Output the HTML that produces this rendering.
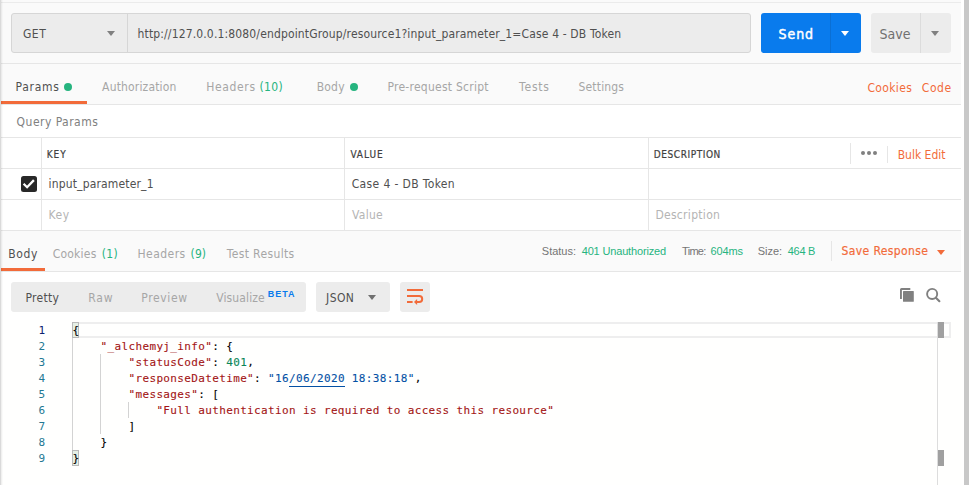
<!DOCTYPE html>
<html><head><meta charset="utf-8">
<style>
html,body{margin:0;padding:0;}
body{width:969px;height:485px;overflow:hidden;background:#fafafa;position:relative;font-family:"DejaVu Sans Condensed","DejaVu Sans","Liberation Sans",sans-serif;font-size:12px;color:#505050;}
.a{position:absolute;}
.t{position:absolute;white-space:pre;height:16px;}
.hl{position:absolute;height:1px;background:#e6e6e6;left:1px;width:960px;}
.vl{position:absolute;width:1px;background:#e6e6e6;}
.tri{position:absolute;width:0;height:0;border-left:4px solid transparent;border-right:4px solid transparent;border-top:5px solid #808080;}
.mono{font-family:"DejaVu Sans Mono","Liberation Mono",monospace;font-size:11px;}
.ln{position:absolute;left:0;width:45px;text-align:right;color:#237893;height:16px;line-height:16px;padding-top:1px;}
.cl{position:absolute;left:72.6px;height:16px;line-height:16px;padding-top:1px;white-space:pre;color:#000;letter-spacing:0.358px;-webkit-text-stroke:0.1px;}
.k{color:#a31515;}
.s{color:#0451a5;}
.n{color:#098658;}
.bm{position:absolute;left:72px;width:7px;height:16px;box-sizing:border-box;border:1px solid #b9b9b9;background:#e5efe5;}
.ig{position:absolute;width:1px;background:#d3d3d3;}
</style></head><body>
<!-- frame -->
<div class="a" style="left:961px;top:0;width:3px;height:485px;background:#ffffff"></div>
<div class="a" style="left:964px;top:0;width:5px;height:485px;background:#c8c8c8"></div>
<div class="hl" style="left:0;top:2px;width:961px;background:#ebebeb"></div>

<!-- url bar -->
<div class="a" style="left:11px;top:13px;width:740px;height:40px;background:#ececec;border:1px solid #d6d6d6;border-radius:3px;box-sizing:border-box"></div>
<div class="vl" style="left:127px;top:14px;height:38px;background:#d6d6d6"></div>
<div class="tri" style="left:107px;top:31px"></div>

<!-- send -->
<div class="a" style="left:761px;top:13px;width:100px;height:40px;background:#097bed;border-radius:3px"></div>
<div class="vl" style="left:830px;top:13px;height:40px;background:#0a6fd4"></div>
<div class="tri" style="left:841px;top:31px;border-top-color:#fff"></div>
<!-- save -->
<div class="a" style="left:871px;top:13px;width:80px;height:40px;background:#ececec;border-radius:3px"></div>
<div class="vl" style="left:920px;top:13px;height:40px;background:#dcdcdc"></div>
<div class="tri" style="left:931px;top:31px"></div>

<div class="hl" style="top:63px"></div>

<!-- request tabs -->
<div class="a" style="left:64px;top:83px;width:8px;height:8px;border-radius:50%;background:#26b47f"></div>
<div class="a" style="left:350px;top:83px;width:8px;height:8px;border-radius:50%;background:#26b47f"></div>
<div class="a" style="left:1px;top:101px;width:86px;height:3px;background:#f26b3a"></div>
<div class="hl" style="top:104px"></div>

<!-- query params -->
<div class="a" style="left:1px;top:105px;width:960px;height:125px;background:#fff"></div>
<div class="hl" style="top:137px"></div>
<div class="hl" style="top:168px"></div>
<div class="hl" style="top:199px"></div>
<div class="hl" style="top:230px"></div>
<div class="vl" style="left:41px;top:137px;height:93px"></div>
<div class="vl" style="left:344px;top:137px;height:93px"></div>
<div class="vl" style="left:648px;top:137px;height:93px"></div>
<div class="vl" style="left:850px;top:143px;height:21px"></div>
<div class="vl" style="left:887px;top:146px;height:17px"></div>
<div class="a" style="left:861px;top:151px;width:4px;height:4px;border-radius:50%;background:#808080;box-shadow:6px 0 0 #808080,12px 0 0 #808080"></div>
<div class="a" style="left:21px;top:176px;width:16px;height:16px;background:#282828;border-radius:2.5px"></div>
<svg class="a" style="left:21px;top:176px" width="16" height="16" viewBox="0 0 16 16"><path d="M2.6 7.8 L6.1 11.2 L12.9 4.1" fill="none" stroke="#fff" stroke-width="2.3"/></svg>

<!-- response tabs -->
<div class="a" style="left:1px;top:268px;width:44px;height:3px;background:#f26b3a"></div>
<div class="hl" style="top:271px"></div>
<div class="vl" style="left:831px;top:241px;height:20px"></div>
<div class="tri" style="left:937px;top:250px;border-top-color:#f26b3a"></div>

<!-- response toolbar -->
<div class="a" style="left:1px;top:272px;width:960px;height:213px;background:#fff"></div>
<div class="a" style="left:11px;top:282px;width:295px;height:30px;background:#ececec;border-radius:3px"></div>
<div class="a" style="left:316px;top:282px;width:74px;height:30px;background:#ececec;border-radius:3px"></div>
<div class="tri" style="left:368px;top:295px;border-top-color:#707070"></div>
<div class="a" style="left:400px;top:282px;width:30px;height:30px;background:#ececec;border-radius:3px"></div>
<svg class="a" style="left:400px;top:282px" width="30" height="30" viewBox="0 0 30 30"><path d="M7 8 H23 M7 14 H19.2 a3 3 0 0 1 0 6 H16.5 M7 20 H12.6" fill="none" stroke="#f26b3a" stroke-width="2"/><path d="M17.1 17 L14 20 L17.1 23 Z" fill="#f26b3a"/></svg>
<!-- copy / search icons -->
<svg class="a" style="left:898px;top:286px" width="18" height="18" viewBox="0 0 18 18"><rect x="5" y="5" width="10.8" height="10.8" rx="0.6" fill="#808080"/><path d="M2.95 12.9 V3.6 a0.6 0.6 0 0 1 0.6 -0.6 H12.3" fill="none" stroke="#808080" stroke-width="1.9"/></svg>
<svg class="a" style="left:924px;top:286px" width="18" height="18" viewBox="0 0 18 18"><circle cx="8.15" cy="7.9" r="5.05" fill="none" stroke="#808080" stroke-width="1.9"/><path d="M11.9 11.7 L15.4 15.2" stroke="#808080" stroke-width="2.1" stroke-linecap="round"/></svg>

<!-- code -->
<div class="a" style="left:1px;top:320px;width:960px;height:165px;background:#fffffe"></div>
<div class="a" style="left:72px;top:322px;width:879px;height:16px;box-sizing:border-box;border:2px solid #eeeeee"></div>
<div class="vl" style="left:937px;top:322px;height:163px;background:#dddddd"></div>
<div class="a" style="left:938px;top:322px;width:6px;height:16px;background:#a0a0a0"></div>
<div class="a" style="left:938px;top:450px;width:6px;height:16px;background:#a0a0a0"></div>
<div class="bm" style="top:322px"></div>
<div class="bm" style="top:450px"></div>
<div class="ig" style="left:72px;top:338px;height:112px"></div>
<div class="ig" style="left:100px;top:354px;height:80px"></div>
<div class="ig" style="left:128px;top:402px;height:16px"></div>
<div class="a" style="left:289px;top:386px;width:56px;height:1px;background:#0451a5"></div>
<div class="mono">
<div class="ln" style="top:322px;color:#0b216f">1</div><div class="cl" style="top:322px">{</div>
<div class="ln" style="top:338px">2</div><div class="cl" style="top:338px">    <span class="k">"_alchemyj_info"</span>: {</div>
<div class="ln" style="top:354px">3</div><div class="cl" style="top:354px">        <span class="k">"statusCode"</span>: <span class="n">401</span>,</div>
<div class="ln" style="top:370px">4</div><div class="cl" style="top:370px">        <span class="k">"responseDatetime"</span>: <span class="s">"16/06/2020 18:38:18"</span>,</div>
<div class="ln" style="top:386px">5</div><div class="cl" style="top:386px">        <span class="k">"messages"</span>: [</div>
<div class="ln" style="top:402px">6</div><div class="cl" style="top:402px">            <span class="k">"Full authentication is required to access this resource"</span></div>
<div class="ln" style="top:418px">7</div><div class="cl" style="top:418px">        ]</div>
<div class="ln" style="top:434px">8</div><div class="cl" style="top:434px">    }</div>
<div class="ln" style="top:450px">9</div><div class="cl" style="top:450px">}</div>
</div>

<!-- texts -->
<div class="t" style="left:23.00px;top:26px;font:normal 12px/16px 'DejaVu Sans Condensed','DejaVu Sans','Liberation Sans',sans-serif;letter-spacing:0.500px;color:#505050;">GET</div>
<div class="t" style="left:137.50px;top:26px;font:normal 12px/16px 'DejaVu Sans Condensed','DejaVu Sans','Liberation Sans',sans-serif;letter-spacing:0.151px;color:#505050;">http://127.0.0.1:8080/endpointGroup/resource1?input_parameter_1=Case 4 - DB Token</div>
<div class="t" style="left:778.60px;top:26px;font:normal 14px/16px 'DejaVu Sans Condensed','DejaVu Sans','Liberation Sans',sans-serif;letter-spacing:0.900px;color:#ffffff;-webkit-text-stroke:0.45px">Send</div>
<div class="t" style="left:879.50px;top:26px;font:normal 14px/16px 'DejaVu Sans Condensed','DejaVu Sans','Liberation Sans',sans-serif;letter-spacing:0.000px;color:#707070;">Save</div>
<div class="t" style="left:15.60px;top:79px;font:normal 12px/16px 'DejaVu Sans Condensed','DejaVu Sans','Liberation Sans',sans-serif;letter-spacing:0.720px;color:#505050;">Params</div>
<div class="t" style="left:102.10px;top:79px;font:normal 12px/16px 'DejaVu Sans Condensed','DejaVu Sans','Liberation Sans',sans-serif;letter-spacing:0.167px;color:#a6a6a6;">Authorization</div>
<div class="t" style="left:206.30px;top:79px;font:normal 12px/16px 'DejaVu Sans Condensed','DejaVu Sans','Liberation Sans',sans-serif;letter-spacing:0.633px;color:#a6a6a6;">Headers</div>
<div class="t" style="left:259.50px;top:79px;font:normal 12px/16px 'DejaVu Sans Condensed','DejaVu Sans','Liberation Sans',sans-serif;letter-spacing:0.367px;color:#26b47f;">(10)</div>
<div class="t" style="left:316.70px;top:79px;font:normal 12px/16px 'DejaVu Sans Condensed','DejaVu Sans','Liberation Sans',sans-serif;letter-spacing:0.200px;color:#a6a6a6;">Body</div>
<div class="t" style="left:387.50px;top:79px;font:normal 12px/16px 'DejaVu Sans Condensed','DejaVu Sans','Liberation Sans',sans-serif;letter-spacing:0.253px;color:#a6a6a6;">Pre-request Script</div>
<div class="t" style="left:519.10px;top:79px;font:normal 12px/16px 'DejaVu Sans Condensed','DejaVu Sans','Liberation Sans',sans-serif;letter-spacing:0.800px;color:#a6a6a6;">Tests</div>
<div class="t" style="left:578.50px;top:79px;font:normal 12px/16px 'DejaVu Sans Condensed','DejaVu Sans','Liberation Sans',sans-serif;letter-spacing:0.171px;color:#a6a6a6;">Settings</div>
<div class="t" style="left:867.40px;top:80px;font:normal 12px/16px 'DejaVu Sans Condensed','DejaVu Sans','Liberation Sans',sans-serif;letter-spacing:0.350px;color:#f26b3a;">Cookies</div>
<div class="t" style="left:921.80px;top:80px;font:normal 12px/16px 'DejaVu Sans Condensed','DejaVu Sans','Liberation Sans',sans-serif;letter-spacing:0.567px;color:#f26b3a;">Code</div>
<div class="t" style="left:16.60px;top:114px;font:normal 12px/16px 'DejaVu Sans Condensed','DejaVu Sans','Liberation Sans',sans-serif;letter-spacing:0.473px;color:#808080;">Query Params</div>
<div class="t" style="left:46.70px;top:147px;font:normal 10px/16px 'DejaVu Sans Condensed','DejaVu Sans','Liberation Sans',sans-serif;letter-spacing:0.950px;color:#404040;-webkit-text-stroke:0.2px">KEY</div>
<div class="t" style="left:350.40px;top:147px;font:normal 10px/16px 'DejaVu Sans Condensed','DejaVu Sans','Liberation Sans',sans-serif;letter-spacing:0.950px;color:#404040;-webkit-text-stroke:0.2px">VALUE</div>
<div class="t" style="left:653.80px;top:147px;font:normal 10px/16px 'DejaVu Sans Condensed','DejaVu Sans','Liberation Sans',sans-serif;letter-spacing:0.560px;color:#404040;-webkit-text-stroke:0.2px">DESCRIPTION</div>
<div class="t" style="left:897.70px;top:147px;font:normal 12px/16px 'DejaVu Sans Condensed','DejaVu Sans','Liberation Sans',sans-serif;letter-spacing:0.000px;color:#f26b3a;">Bulk Edit</div>
<div class="t" style="left:48.50px;top:176px;font:normal 12px/16px 'DejaVu Sans Condensed','DejaVu Sans','Liberation Sans',sans-serif;letter-spacing:0.162px;color:#505050;">input_parameter_1</div>
<div class="t" style="left:351.70px;top:176px;font:normal 12px/16px 'DejaVu Sans Condensed','DejaVu Sans','Liberation Sans',sans-serif;letter-spacing:0.369px;color:#505050;">Case 4 - DB Token</div>
<div class="t" style="left:48.50px;top:207px;font:normal 12px/16px 'DejaVu Sans Condensed','DejaVu Sans','Liberation Sans',sans-serif;letter-spacing:0.600px;color:#b4b4b4;">Key</div>
<div class="t" style="left:352.10px;top:207px;font:normal 12px/16px 'DejaVu Sans Condensed','DejaVu Sans','Liberation Sans',sans-serif;letter-spacing:0.275px;color:#b4b4b4;">Value</div>
<div class="t" style="left:655.40px;top:207px;font:normal 12px/16px 'DejaVu Sans Condensed','DejaVu Sans','Liberation Sans',sans-serif;letter-spacing:0.300px;color:#b4b4b4;">Description</div>
<div class="t" style="left:8.30px;top:246px;font:normal 12px/16px 'DejaVu Sans Condensed','DejaVu Sans','Liberation Sans',sans-serif;letter-spacing:0.600px;color:#505050;">Body</div>
<div class="t" style="left:52.70px;top:246px;font:normal 12px/16px 'DejaVu Sans Condensed','DejaVu Sans','Liberation Sans',sans-serif;letter-spacing:0.217px;color:#a6a6a6;">Cookies</div>
<div class="t" style="left:101.70px;top:246px;font:normal 12px/16px 'DejaVu Sans Condensed','DejaVu Sans','Liberation Sans',sans-serif;letter-spacing:0.350px;color:#26b47f;">(1)</div>
<div class="t" style="left:137.50px;top:246px;font:normal 12px/16px 'DejaVu Sans Condensed','DejaVu Sans','Liberation Sans',sans-serif;letter-spacing:0.467px;color:#a6a6a6;">Headers</div>
<div class="t" style="left:190.60px;top:246px;font:normal 12px/16px 'DejaVu Sans Condensed','DejaVu Sans','Liberation Sans',sans-serif;letter-spacing:0.100px;color:#26b47f;">(9)</div>
<div class="t" style="left:226.80px;top:246px;font:normal 12px/16px 'DejaVu Sans Condensed','DejaVu Sans','Liberation Sans',sans-serif;letter-spacing:0.364px;color:#a6a6a6;">Test Results</div>
<div class="t" style="left:541.80px;top:243px;font:normal 11px/16px 'Liberation Sans',sans-serif;letter-spacing:0.000px;color:#757575;">Status:</div>
<div class="t" style="left:581.70px;top:243px;font:normal 11px/16px 'Liberation Sans',sans-serif;letter-spacing:-0.160px;color:#26b47f;">401 Unauthorized</div>
<div class="t" style="left:682.10px;top:243px;font:normal 11px/16px 'Liberation Sans',sans-serif;letter-spacing:-0.725px;color:#757575;">Time:</div>
<div class="t" style="left:710.60px;top:243px;font:normal 11px/16px 'Liberation Sans',sans-serif;letter-spacing:-0.175px;color:#26b47f;">604ms</div>
<div class="t" style="left:757.70px;top:243px;font:normal 11px/16px 'Liberation Sans',sans-serif;letter-spacing:0.000px;color:#757575;">Size:</div>
<div class="t" style="left:787.70px;top:243px;font:normal 11px/16px 'Liberation Sans',sans-serif;letter-spacing:-0.250px;color:#26b47f;">464 B</div>
<div class="t" style="left:841.50px;top:243px;font:normal 12px/16px 'DejaVu Sans Condensed','DejaVu Sans','Liberation Sans',sans-serif;letter-spacing:0.392px;color:#f26b3a;-webkit-text-stroke:0.2px">Save Response</div>
<div class="t" style="left:25.50px;top:290px;font:normal 12px/16px 'DejaVu Sans Condensed','DejaVu Sans','Liberation Sans',sans-serif;letter-spacing:0.280px;color:#505050;">Pretty</div>
<div class="t" style="left:88.20px;top:290px;font:normal 12px/16px 'DejaVu Sans Condensed','DejaVu Sans','Liberation Sans',sans-serif;letter-spacing:0.900px;color:#a6a6a6;">Raw</div>
<div class="t" style="left:141.30px;top:290px;font:normal 12px/16px 'DejaVu Sans Condensed','DejaVu Sans','Liberation Sans',sans-serif;letter-spacing:0.633px;color:#a6a6a6;">Preview</div>
<div class="t" style="left:216.20px;top:290px;font:normal 12px/16px 'DejaVu Sans Condensed','DejaVu Sans','Liberation Sans',sans-serif;letter-spacing:0.125px;color:#a6a6a6;">Visualize</div>
<div class="t" style="left:267.70px;top:286px;font:bold 9px/16px 'Liberation Sans',sans-serif;letter-spacing:1.000px;color:#097bed;">BETA</div>
<div class="t" style="left:326.10px;top:290px;font:normal 12px/16px 'DejaVu Sans Condensed','DejaVu Sans','Liberation Sans',sans-serif;letter-spacing:0.400px;color:#505050;">JSON</div>

<!-- left edge -->
<div class="a" style="left:0;top:0;width:1px;height:485px;background:#dadada"></div>
<div class="a" style="left:1px;top:0;width:1px;height:485px;background:rgba(0,0,0,0.06)"></div>
<div class="a" style="left:2px;top:0;width:1px;height:485px;background:rgba(0,0,0,0.02)"></div>
</body></html>
